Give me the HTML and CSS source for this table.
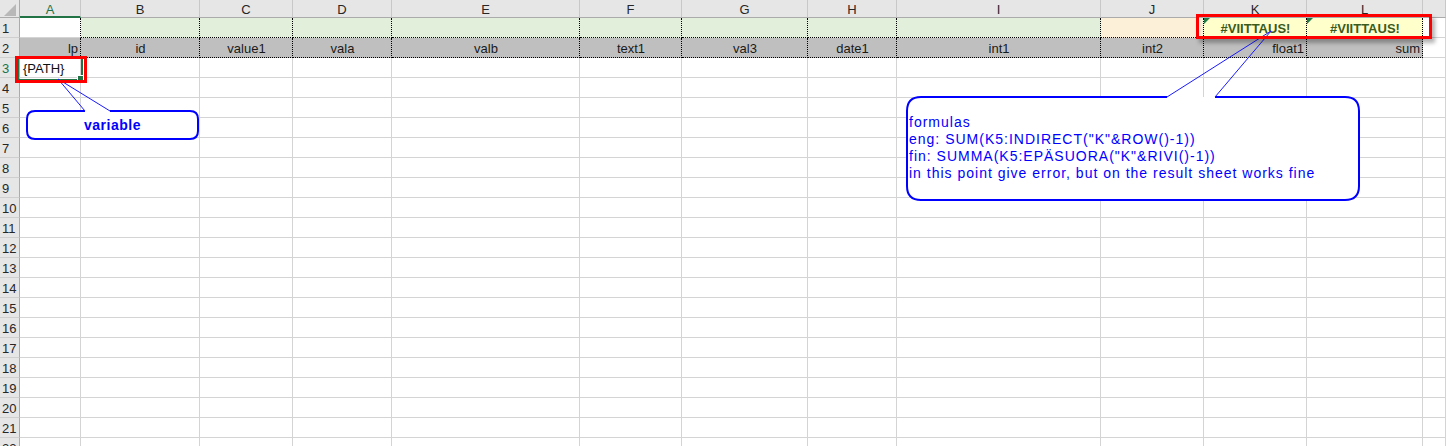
FILE: index.html
```html
<!DOCTYPE html>
<html>
<head>
<meta charset="utf-8">
<link rel="stylesheet" href="styles.css">
</head>
<body>
<div class="sheet">
  <div class="row hdr">
    <div class="corner"><svg width="19" height="17" viewBox="0 0 19 17"><polygon points="16,4 16,16 4,16" fill="#b8b8b8"/></svg></div>
    <div class="ca">A</div><div>B</div><div>C</div><div>D</div><div>E</div><div>F</div><div>G</div><div>H</div><div>I</div><div>J</div><div>K</div><div>L</div><div></div>
  </div>
  <div class="row">
    <div class="rh">1</div>
    <div class="a1"></div>
    <div class="g"></div><div class="g"></div><div class="g"></div><div class="g"></div><div class="g"></div><div class="g"></div><div class="g"></div><div class="g"></div>
    <div class="j1"></div>
    <div class="err">#VIITTAUS!</div>
    <div class="err">#VIITTAUS!</div>
    <div></div>
  </div>
  <div class="row">
    <div class="rh">2</div>
    <div class="h rt">lp</div><div class="h">id</div><div class="h">value1</div><div class="h">vala</div><div class="h">valb</div><div class="h">text1</div><div class="h">val3</div><div class="h">date1</div><div class="h">int1</div><div class="h">int2</div><div class="h rt">float1</div><div class="h rt">sum</div>
    <div></div>
  </div>
  <div class="row">
    <div class="rh rsel">3</div>
    <div>{PATH}</div><div></div><div></div><div></div><div></div><div></div><div></div><div></div><div></div><div></div><div></div><div></div><div></div>
  </div>
  <div class="row"><div class="rh">4</div><div></div><div></div><div></div><div></div><div></div><div></div><div></div><div></div><div></div><div></div><div></div><div></div><div></div></div>
  <div class="row"><div class="rh">5</div><div></div><div></div><div></div><div></div><div></div><div></div><div></div><div></div><div></div><div></div><div></div><div></div><div></div></div>
  <div class="row"><div class="rh">6</div><div></div><div></div><div></div><div></div><div></div><div></div><div></div><div></div><div></div><div></div><div></div><div></div><div></div></div>
  <div class="row"><div class="rh">7</div><div></div><div></div><div></div><div></div><div></div><div></div><div></div><div></div><div></div><div></div><div></div><div></div><div></div></div>
  <div class="row"><div class="rh">8</div><div></div><div></div><div></div><div></div><div></div><div></div><div></div><div></div><div></div><div></div><div></div><div></div><div></div></div>
  <div class="row"><div class="rh">9</div><div></div><div></div><div></div><div></div><div></div><div></div><div></div><div></div><div></div><div></div><div></div><div></div><div></div></div>
  <div class="row"><div class="rh">10</div><div></div><div></div><div></div><div></div><div></div><div></div><div></div><div></div><div></div><div></div><div></div><div></div><div></div></div>
  <div class="row"><div class="rh">11</div><div></div><div></div><div></div><div></div><div></div><div></div><div></div><div></div><div></div><div></div><div></div><div></div><div></div></div>
  <div class="row"><div class="rh">12</div><div></div><div></div><div></div><div></div><div></div><div></div><div></div><div></div><div></div><div></div><div></div><div></div><div></div></div>
  <div class="row"><div class="rh">13</div><div></div><div></div><div></div><div></div><div></div><div></div><div></div><div></div><div></div><div></div><div></div><div></div><div></div></div>
  <div class="row"><div class="rh">14</div><div></div><div></div><div></div><div></div><div></div><div></div><div></div><div></div><div></div><div></div><div></div><div></div><div></div></div>
  <div class="row"><div class="rh">15</div><div></div><div></div><div></div><div></div><div></div><div></div><div></div><div></div><div></div><div></div><div></div><div></div><div></div></div>
  <div class="row"><div class="rh">16</div><div></div><div></div><div></div><div></div><div></div><div></div><div></div><div></div><div></div><div></div><div></div><div></div><div></div></div>
  <div class="row"><div class="rh">17</div><div></div><div></div><div></div><div></div><div></div><div></div><div></div><div></div><div></div><div></div><div></div><div></div><div></div></div>
  <div class="row"><div class="rh">18</div><div></div><div></div><div></div><div></div><div></div><div></div><div></div><div></div><div></div><div></div><div></div><div></div><div></div></div>
  <div class="row"><div class="rh">19</div><div></div><div></div><div></div><div></div><div></div><div></div><div></div><div></div><div></div><div></div><div></div><div></div><div></div></div>
  <div class="row"><div class="rh">20</div><div></div><div></div><div></div><div></div><div></div><div></div><div></div><div></div><div></div><div></div><div></div><div></div><div></div></div>
  <div class="row"><div class="rh">21</div><div></div><div></div><div></div><div></div><div></div><div></div><div></div><div></div><div></div><div></div><div></div><div></div><div></div></div>
  <div class="row"><div class="rh">22</div><div></div><div></div><div></div><div></div><div></div><div></div><div></div><div></div><div></div><div></div><div></div><div></div><div></div></div>

  <div class="selbox"></div>
  <div class="handle"></div>

  <svg class="shapes" width="1446" height="446" viewBox="0 0 1446 446">
    <path class="fill" d="M35 111 H190 Q198 111 198 119 V131 Q198 139 190 139 H35 Q27 139 27 131 V119 Q27 111 35 111 Z"/>
    <path class="edge" d="M110 111 H190 Q198 111 198 119 V131 Q198 139 190 139 H35 Q27 139 27 131 V119 Q27 111 35 111 H85"/>
    <path class="tail" d="M85 111 L58 79 L110 111"/>
    <path class="fill" d="M921 97 H1345 Q1359 97 1359 111 V186 Q1359 200 1345 200 H921 Q907 200 907 186 V111 Q907 97 921 97 Z"/>
    <path class="edge" d="M1215 97 H1345 Q1359 97 1359 111 V186 Q1359 200 1345 200 H921 Q907 200 907 186 V111 Q907 97 921 97 H1167"/>
    <path class="tail" d="M1167 97 L1271 31 L1215 97"/>
  </svg>

  <div class="mark mark-a3"></div>
  <div class="mark mark-kl"></div>

  <div class="note-var">variable</div>
  <div class="note-f">formulas<br>eng: SUM(K5:INDIRECT("K"&amp;ROW()-1))<br>fin: SUMMA(K5:EPÄSUORA("K"&amp;RIVI()-1))<br>in this point give error, but on the result sheet works fine</div>
</div>
</body>
</html>
```
FILE: styles.css
```css
html, body {
  margin: 0;
  padding: 0;
  background: #fff;
}
body {
  font-family: "Liberation Sans", Arial, sans-serif;
  font-size: 13px;
  color: #111;
  overflow: hidden;
}
.sheet {
  position: relative;
  width: 1446px;
  height: 446px;
  overflow: hidden;
}
.row {
  display: grid;
  grid-template-columns: 20px 61px 119px 93px 99px 188px 102px 126px 89px 204px 103px 103px 116px 1fr;
  height: 20px;
}
.row > div {
  box-sizing: border-box;
  border-right: 1px solid #d4d4d4;
  border-bottom: 1px solid #d4d4d4;
  padding: 2px 2px 0 3px;
  line-height: 18px;
  white-space: nowrap;
  overflow: hidden;
}

/* column header */
.row.hdr {
  height: 18px;
}
.row.hdr > div {
  background: #e6e6e6;
  border-right-color: #c8c8c8;
  border-bottom-color: #ababab;
  text-align: center;
  color: #262626;
  padding: 2px 0 0;
  line-height: 15px;
}
.row.hdr > .corner {
  padding: 0;
  border-right-color: #ababab;
}
.corner svg {
  display: block;
}
.row.hdr > .ca {
  color: #217346;
  border-bottom: 2px solid #217346;
}

/* row header */
.row > .rh {
  background: #e6e6e6;
  border-right-color: #ababab;
  border-bottom-color: #cfcfcf;
  color: #262626;
  padding-left: 2px;
  text-align: left;
}
.row > .rsel {
  color: #217346;
}

/* row 1 */
.row > .a1 {
  border-right: 1px dotted #000;
}
.row > .g {
  background: #e2efda;
  border-right: 1px dotted #000;
  border-bottom: 1px dotted #000;
}
.row > .j1 {
  background: #fdf0d9;
  border-right: 1px dotted #000;
  border-bottom: 1px dotted #000;
}
.row > .err {
  position: relative;
  background: #ffffcc;
  border-right: 1px dotted #000;
  border-bottom: 1px dotted #000;
  font-weight: bold;
  color: #3b5b1d;
  text-align: center;
}
.err::before {
  content: "";
  position: absolute;
  left: 0;
  top: 0;
  border-top: 6px solid #1f7a45;
  border-right: 6px solid transparent;
}

/* row 2 */
.row > .h {
  background: #bfbfbf;
  border-right: 1px dotted #000;
  border-bottom: 1px dotted #000;
  text-align: center;
  color: #1a1a1a;
}
.row > .h.rt {
  text-align: right;
  padding-right: 2px;
}

/* selection */
.selbox {
  position: absolute;
  left: 17px;
  top: 56px;
  width: 66px;
  height: 25px;
  box-sizing: border-box;
  border: 2px solid #217346;
}
.handle {
  position: absolute;
  left: 77px;
  top: 75px;
  width: 7px;
  height: 7px;
  box-sizing: border-box;
  background: #217346;
  border: 1px solid #fff;
}

/* callouts */
.shapes {
  position: absolute;
  left: 0;
  top: 0;
  pointer-events: none;
}
.shapes .fill {
  fill: #fff;
  stroke: none;
}
.shapes .edge {
  fill: none;
  stroke: #0000ff;
  stroke-width: 2;
}
.shapes .tail {
  fill: none;
  stroke: #1a1aff;
  stroke-width: 1;
}

.mark {
  position: absolute;
  box-sizing: border-box;
  border: 3px solid #ff0000;
}
.mark-a3 {
  left: 15px;
  top: 56px;
  width: 72px;
  height: 27px;
}
.mark-kl {
  left: 1196px;
  top: 14px;
  width: 236px;
  height: 25px;
  box-shadow: 3px 4px 4px rgba(0, 0, 0, 0.3);
}

.note-var {
  position: absolute;
  left: 26px;
  top: 110px;
  width: 173px;
  height: 30px;
  line-height: 30px;
  text-align: center;
  color: #0000ff;
  font-weight: bold;
  font-size: 14px;
  letter-spacing: 0.5px;
}
.note-f {
  position: absolute;
  left: 909px;
  top: 114px;
  color: #0000ff;
  font-size: 14px;
  line-height: 17px;
  letter-spacing: 1px;
  white-space: nowrap;
}
```
